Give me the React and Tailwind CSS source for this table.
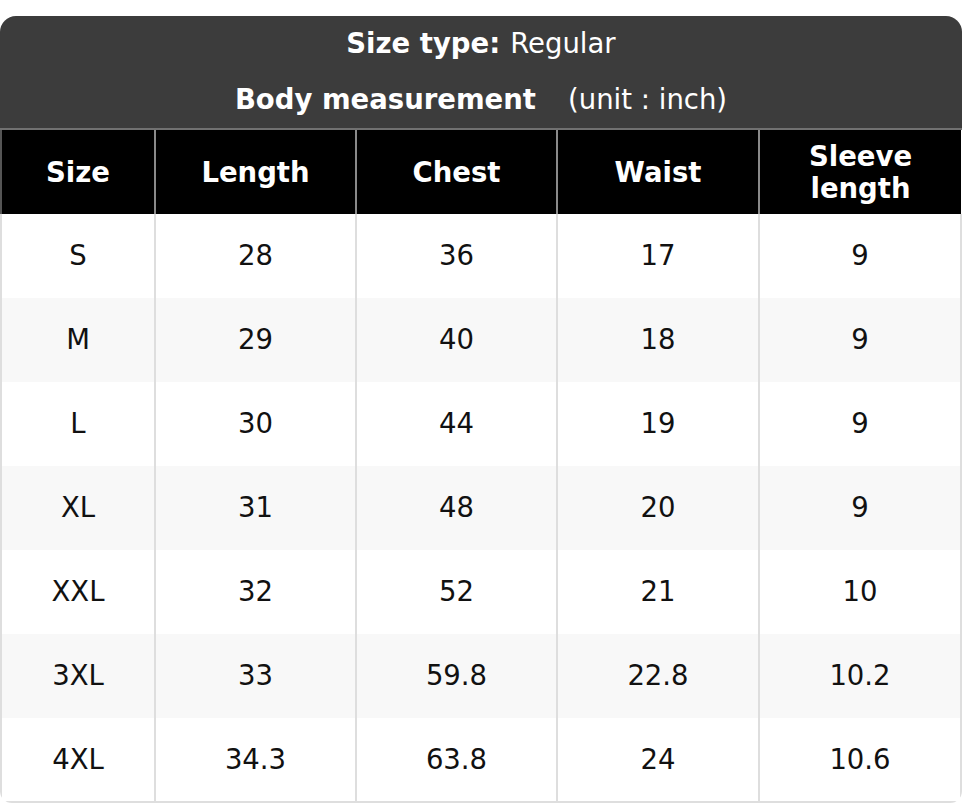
import React from "react";

const rows = [
  ["S", "28", "36", "17", "9"],
  ["M", "29", "40", "18", "9"],
  ["L", "30", "44", "19", "9"],
  ["XL", "31", "48", "20", "9"],
  ["XXL", "32", "52", "21", "10"],
  ["3XL", "33", "59.8", "22.8", "10.2"],
  ["4XL", "34.3", "63.8", "24", "10.6"],
];

const heads = ["Size", "Length", "Chest", "Waist", "Sleeve length"];

export default function App() {
  return (
    <div className="bg-white w-[962px] h-[804px] pt-[16px] font-['DejaVu_Sans',sans-serif] text-[27.5px]">
      <div className="rounded-t-[16px] rounded-b-[12px] overflow-hidden">
        <div className="bg-[#3c3c3c] text-white text-center border-b-2 border-[#717171]">
          <div className="h-[56px] flex items-center justify-center">
            <span className="font-bold">Size type:</span>
            <span className="ml-[10px]">Regular</span>
          </div>
          <div className="h-[56px] flex items-center justify-center">
            <span className="font-bold">Body measurement</span>
            <span className="ml-[32px]">(unit : inch)</span>
          </div>
        </div>
        <table className="w-full table-fixed border-collapse">
          <colgroup>
            <col className="w-[154px]" />
            <col className="w-[201px]" />
            <col className="w-[201px]" />
            <col className="w-[202px]" />
            <col />
          </colgroup>
          <thead>
            <tr className="bg-black text-white h-[84px]">
              {heads.map((h, i) => (
                <th
                  key={h}
                  className={
                    "font-bold leading-[32px] px-2 " +
                    (i === 0 ? "border-l-2 border-[#555]" : "border-l-2 border-[#8a8a8a]")
                  }
                >
                  {i === 4 ? (
                    <>
                      Sleeve
                      <br />
                      length
                    </>
                  ) : (
                    h
                  )}
                </th>
              ))}
            </tr>
          </thead>
          <tbody>
            {rows.map((r, ri) => (
              <tr
                key={r[0]}
                className={
                  "h-[84px] text-[#111] " + (ri % 2 === 1 ? "bg-[#f8f8f8]" : "bg-white")
                }
              >
                {r.map((c, ci) => (
                  <td
                    key={ci}
                    className={
                      "text-center border-l-2 border-[#dedede] " +
                      (ci === 4 ? "border-r-2 " : "") +
                      (ri === rows.length - 1 ? "border-b-2" : "")
                    }
                  >
                    {c}
                  </td>
                ))}
              </tr>
            ))}
          </tbody>
        </table>
      </div>
    </div>
  );
}
